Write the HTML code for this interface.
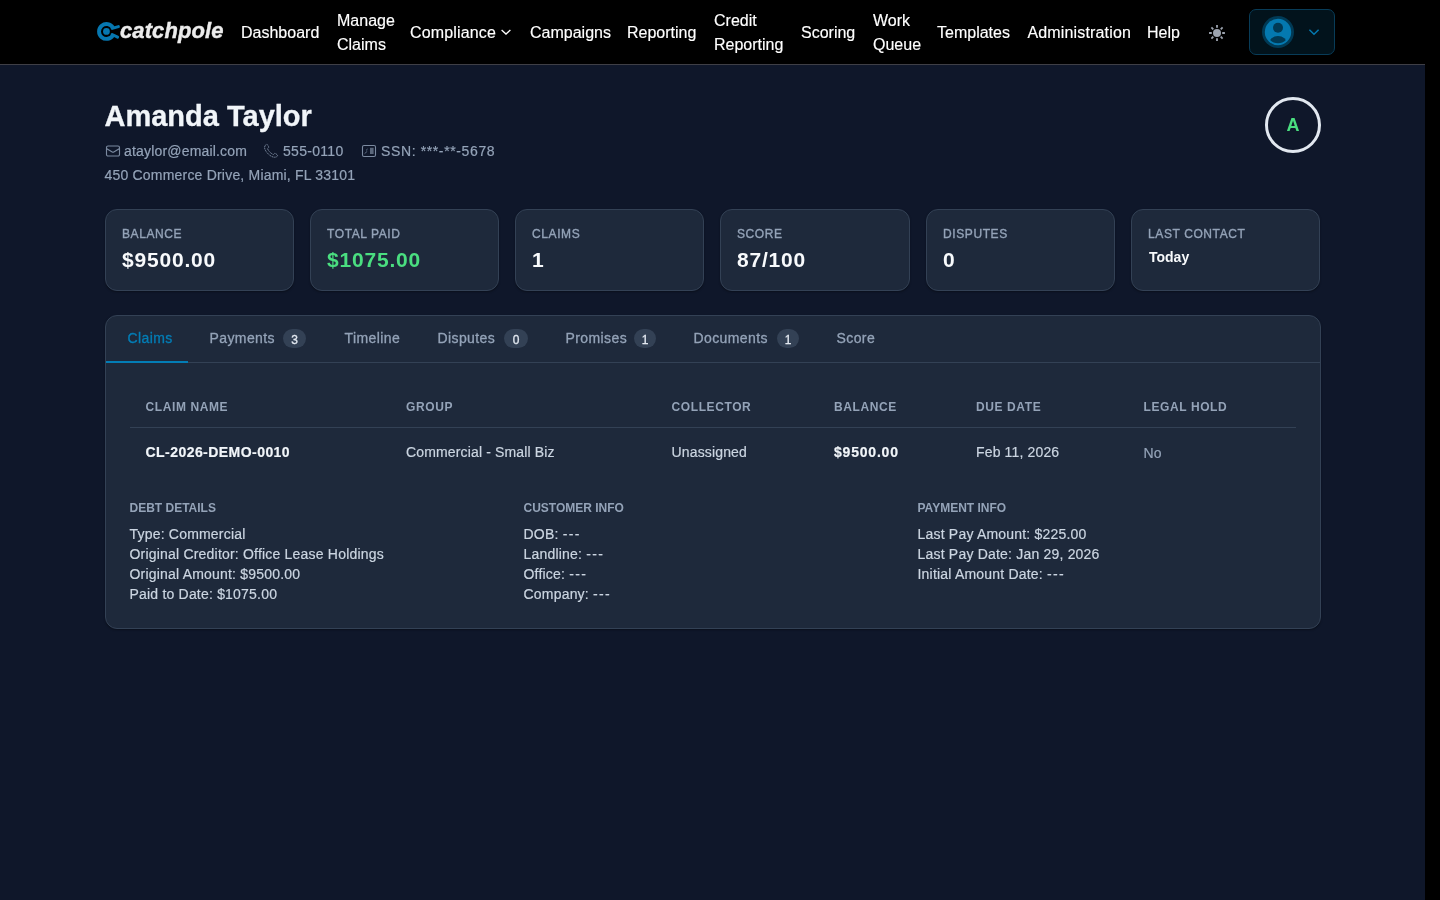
<!DOCTYPE html>
<html>
<head>
<meta charset="utf-8">
<style>
html,body{margin:0;padding:0;}
html{background:#000;}
body{width:1440px;height:900px;position:relative;overflow:hidden;font-family:"Liberation Sans",sans-serif;background:#000;-webkit-font-smoothing:antialiased;}
#wrap{position:absolute;left:0;top:0;width:1440px;height:900px;will-change:transform;}
.abs{position:absolute;white-space:nowrap;}
#main{position:absolute;left:0;top:65px;width:1425px;height:835px;background:#0f172a;}
#nav{position:absolute;left:0;top:0;width:1440px;height:64px;background:#000;}
#navline{position:absolute;left:0;top:64px;width:1425px;height:1px;background:#3f3f46;}
.ni{position:absolute;color:#fff;font-size:16px;line-height:24px;white-space:nowrap;-webkit-text-stroke:0.15px currentColor;}
.card{position:absolute;top:209px;width:189.33px;height:82px;box-sizing:border-box;background:#1e293b;border:1px solid #334155;border-radius:12px;box-shadow:0 1px 2px rgba(0,0,0,.35);}
.lbl{position:absolute;left:16px;top:16px;font-size:12px;line-height:16px;letter-spacing:0.05em;color:#94a3b8;text-transform:uppercase;white-space:nowrap;-webkit-text-stroke:0.35px #94a3b8;}
.val{position:absolute;left:16px;top:36px;font-size:21px;line-height:28px;font-weight:bold;color:#f8fafc;letter-spacing:0.8px;white-space:nowrap;}
.txt14{font-size:14px;line-height:20px;-webkit-text-stroke:0.2px currentColor;}
.tab{position:absolute;top:328px;font-size:14px;line-height:20px;color:#94a3b8;white-space:nowrap;letter-spacing:0.4px;-webkit-text-stroke:0.3px currentColor;}
.badge{position:absolute;top:329px;height:19px;border-radius:10px;background:#334155;color:#e2e8f0;font-size:12px;line-height:22px;text-align:center;-webkit-text-stroke:0.3px #e2e8f0;}
.th{position:absolute;top:399px;font-size:12px;line-height:16px;font-weight:bold;letter-spacing:0.05em;color:#94a3b8;white-space:nowrap;}
.td{position:absolute;top:442px;font-size:14px;line-height:20px;color:#cbd5e1;white-space:nowrap;letter-spacing:0.15px;-webkit-text-stroke:0.2px currentColor;}
.sec{position:absolute;top:500px;font-size:12px;line-height:16px;font-weight:bold;color:#94a3b8;white-space:nowrap;}
.dl{position:absolute;top:524px;font-size:14px;line-height:20px;color:#cbd5e1;white-space:nowrap;letter-spacing:0.2px;-webkit-text-stroke:0.2px currentColor;}
</style>
</head>
<body>
<div id="wrap">
<div id="nav">
  <!-- logo -->
  <svg class="abs" style="left:94px;top:18px" width="30" height="28" viewBox="0 0 30 28">
    <path d="M18.95 9.73 A7.45 7.45 0 1 0 18.95 17.17" fill="none" stroke="#0677b0" stroke-width="3.9"/>
    <circle cx="12.45" cy="13.45" r="3.4" fill="#0677b0"/>
    <path d="M18.2 10.4 L24.4 8.6" stroke="#0677b0" stroke-width="3" stroke-linecap="round"/>
    <path d="M18.2 16.5 L23.6 19.1" stroke="#0677b0" stroke-width="3" stroke-linecap="round"/>
  </svg>
  <div class="abs" style="left:120px;top:17px;font-size:22px;line-height:28px;font-weight:bold;font-style:italic;color:#ececec;letter-spacing:0.1px;-webkit-text-stroke:0.4px #ececec">catchpole</div>

  <div class="ni" style="left:241px;top:21px">Dashboard</div>
  <div class="ni" style="left:337px;top:9px">Manage<br>Claims</div>
  <div class="ni" style="left:410px;top:21px;letter-spacing:0.15px">Compliance</div>
  <svg class="abs" style="left:500px;top:26px" width="12" height="12" viewBox="0 0 12 12"><path d="M1.6 4 L6 8.1 L10.4 4" fill="none" stroke="#fff" stroke-width="1.3"/></svg>
  <div class="ni" style="left:530px;top:21px">Campaigns</div>
  <div class="ni" style="left:627px;top:21px">Reporting</div>
  <div class="ni" style="left:714px;top:9px">Credit<br>Reporting</div>
  <div class="ni" style="left:801px;top:21px">Scoring</div>
  <div class="ni" style="left:873px;top:9px">Work<br>Queue</div>
  <div class="ni" style="left:937px;top:21px">Templates</div>
  <div class="ni" style="left:1027.5px;top:21px;letter-spacing:0.15px">Administration</div>
  <div class="ni" style="left:1147px;top:21px">Help</div>

  <!-- sun -->
  <svg class="abs" style="left:1205px;top:21px" width="24" height="24" viewBox="0 0 24 24">
    <circle cx="12" cy="12" r="4" fill="#9ca3af"/>
    <g stroke="#9ca3af" stroke-width="1.8" stroke-linecap="butt">
      <path d="M12 4.1v2.7M12 17.2v2.7M4.1 12h2.7M17.2 12h2.7M6.4 6.4l1.9 1.9M15.7 15.7l1.9 1.9M6.4 17.6l1.9-1.9M15.7 8.3l1.9-1.9"/>
    </g>
  </svg>
  <!-- profile button -->
  <div class="abs" style="left:1249px;top:9px;width:86px;height:46px;box-sizing:border-box;border:1px solid #083c58;border-radius:7px;background:#02131c;"></div>
  <svg class="abs" style="left:1262px;top:16px" width="32" height="32" viewBox="0 0 32 32">
    <circle cx="16" cy="16" r="16" fill="#013a55"/>
    <circle cx="16" cy="16" r="13.2" fill="#0479b0"/>
    <clipPath id="cp2"><circle cx="16" cy="16" r="11.2"/></clipPath>
    <circle cx="16" cy="11.7" r="5" fill="#013a55"/>
    <ellipse cx="16" cy="27.8" rx="9" ry="7.8" fill="#013a55" clip-path="url(#cp2)"/>
  </svg>
  <svg class="abs" style="left:1306px;top:26px" width="16" height="12" viewBox="0 0 16 12"><path d="M3.4 3.7 L8 8.2 L12.6 3.7" fill="none" stroke="#0479b0" stroke-width="1.5"/></svg>
</div>
<div id="navline"></div>

<div id="main"></div>

<!-- header -->
<div class="abs" style="left:104.5px;top:98px;font-size:29px;line-height:36px;font-weight:bold;color:#f1f5f9;-webkit-text-stroke:0.3px #f1f5f9">Amanda Taylor</div>

<svg class="abs" style="left:105px;top:142.5px" width="16" height="16" viewBox="0 0 24 24">
  <path d="M21.75 6.75v10.5a2.25 2.25 0 01-2.25 2.25h-15a2.25 2.25 0 01-2.25-2.25V6.75m19.5 0A2.25 2.25 0 0019.5 4.5h-15a2.25 2.25 0 00-2.25 2.25m19.5 0v.243a2.25 2.25 0 01-1.07 1.916l-7.5 4.615a2.25 2.25 0 01-2.36 0L3.32 8.91a2.25 2.25 0 01-1.07-1.916V6.75" fill="none" stroke="#7b8aa0" stroke-width="1.7"/>
</svg>
<div class="abs txt14" style="left:124px;top:141px;color:#94a3b8;letter-spacing:0.18px">ataylor@email.com</div>
<svg class="abs" style="left:263px;top:143px" width="16" height="16" viewBox="0 0 16 16">
  <path d="M2.2 2.6 C2.6 1.6 3.6 1.2 4.3 1.6 L5.6 3.6 C5.9 4.1 5.7 4.7 5.2 5 L4.5 5.5 C5.3 7.9 7.8 10.5 10.4 11.5 L11 10.8 C11.3 10.3 11.9 10.2 12.4 10.5 L14.3 11.8 C14.8 12.3 14.6 13.3 13.5 13.8 C12.3 14.4 10.8 14.5 8.8 13.5 C5.6 11.9 3 9 1.8 5.9 C1.3 4.6 1.6 3.4 2.2 2.6 Z" fill="none" stroke="#7b8aa0" stroke-width="0.95" stroke-dasharray="1.3 0.6"/>
</svg>
<div class="abs txt14" style="left:283px;top:141px;color:#94a3b8;letter-spacing:0.3px;">555-0110</div>
<svg class="abs" style="left:361px;top:144px" width="16" height="14" viewBox="0 0 16 14">
  <rect x="1.5" y="1.5" width="13" height="11" rx="1.5" fill="none" stroke="#7b8aa0" stroke-width="1.1"/>
  <path d="M3.6 9.6 L6.2 7.4 M5 6.4 L6.6 5" stroke="#64748b" stroke-width="0.9"/>
  <rect x="9" y="3.8" width="3.6" height="6.2" fill="#5b687c"/>
</svg>
<div class="abs txt14" style="left:381px;top:141px;color:#94a3b8;letter-spacing:0.62px;">SSN: ***-**-5678</div>
<div class="abs txt14" style="left:104.5px;top:165px;color:#94a3b8;letter-spacing:0.2px;">450 Commerce Drive, Miami, FL 33101</div>

<!-- avatar -->
<div class="abs" style="left:1265px;top:97px;width:56px;height:56px;box-sizing:border-box;border:3.5px solid #e2e8f0;border-radius:50%;"></div>
<div class="abs" style="left:1265px;top:97px;width:56px;height:56px;line-height:56px;text-align:center;font-size:18px;font-weight:bold;color:#4ade80;">A</div>

<!-- stat cards -->
<div class="card" style="left:105px;width:189px"><div class="lbl">Balance</div><div class="val">$9500.00</div></div>
<div class="card" style="left:310px;width:189px"><div class="lbl">Total Paid</div><div class="val" style="color:#4ade80">$1075.00</div></div>
<div class="card" style="left:515px;width:189px"><div class="lbl">Claims</div><div class="val">1</div></div>
<div class="card" style="left:720px;width:190px"><div class="lbl">Score</div><div class="val">87/100</div></div>
<div class="card" style="left:926px;width:189px"><div class="lbl">Disputes</div><div class="val">0</div></div>
<div class="card" style="left:1131px;width:189px"><div class="lbl">Last Contact</div><div class="val" style="font-size:14px;top:37px;left:17px;line-height:20px;letter-spacing:0">Today</div></div>

<!-- panel -->
<div class="abs" style="left:105px;top:315px;width:1216px;height:314px;box-sizing:border-box;background:#1e293b;border:1px solid #334155;border-radius:12px;box-shadow:0 1px 2px rgba(0,0,0,.35);"></div>
<div class="abs" style="left:106px;top:362px;width:1214px;height:1px;background:#334155;"></div>
<div class="abs" style="left:106px;top:361px;width:82px;height:2px;background:#037db6;"></div>

<div class="tab" style="left:127.5px;color:#037db6">Claims</div>
<div class="tab" style="left:209.5px">Payments</div><div class="badge" style="left:283px;width:23px">3</div>
<div class="tab" style="left:344.5px">Timeline</div>
<div class="tab" style="left:437.5px">Disputes</div><div class="badge" style="left:504px;width:24px">0</div>
<div class="tab" style="left:565.5px">Promises</div><div class="badge" style="left:634px;width:22px">1</div>
<div class="tab" style="left:693.5px">Documents</div><div class="badge" style="left:777px;width:22px">1</div>
<div class="tab" style="left:836.5px">Score</div>

<!-- table -->
<div class="th" style="left:145.5px">CLAIM NAME</div>
<div class="th" style="left:406px">GROUP</div>
<div class="th" style="left:671.5px">COLLECTOR</div>
<div class="th" style="left:834px">BALANCE</div>
<div class="th" style="left:976px">DUE DATE</div>
<div class="th" style="left:1143.5px">LEGAL HOLD</div>
<div class="abs" style="left:130px;top:427px;width:1166px;height:1px;background:#334155;"></div>

<div class="td" style="left:145.5px;font-weight:bold;color:#f1f5f9;letter-spacing:0.45px">CL-2026-DEMO-0010</div>
<div class="td" style="left:406px">Commercial - Small Biz</div>
<div class="td" style="left:671.5px">Unassigned</div>
<div class="td" style="left:834px;font-weight:bold;color:#f1f5f9;letter-spacing:0.8px">$9500.00</div>
<div class="td" style="left:976px">Feb 11, 2026</div>
<div class="td" style="left:1143.5px;top:443px;color:#94a3b8">No</div>

<!-- details -->
<div class="sec" style="left:129.5px">DEBT DETAILS</div>
<div class="dl" style="left:129.5px">Type: Commercial<br>Original Creditor: Office Lease Holdings<br>Original Amount: $9500.00<br>Paid to Date: $1075.00</div>
<div class="sec" style="left:523.5px">CUSTOMER INFO</div>
<div class="dl" style="left:523.5px">DOB: <span style="letter-spacing:1.4px">---</span><br>Landline: <span style="letter-spacing:1.4px">---</span><br>Office: <span style="letter-spacing:1.4px">---</span><br>Company: <span style="letter-spacing:1.4px">---</span></div>
<div class="sec" style="left:917.5px">PAYMENT INFO</div>
<div class="dl" style="left:917.5px">Last Pay Amount: $225.00<br>Last Pay Date: Jan 29, 2026<br>Initial Amount Date: <span style="letter-spacing:1.4px">---</span></div>

</div>
</body>
</html>
